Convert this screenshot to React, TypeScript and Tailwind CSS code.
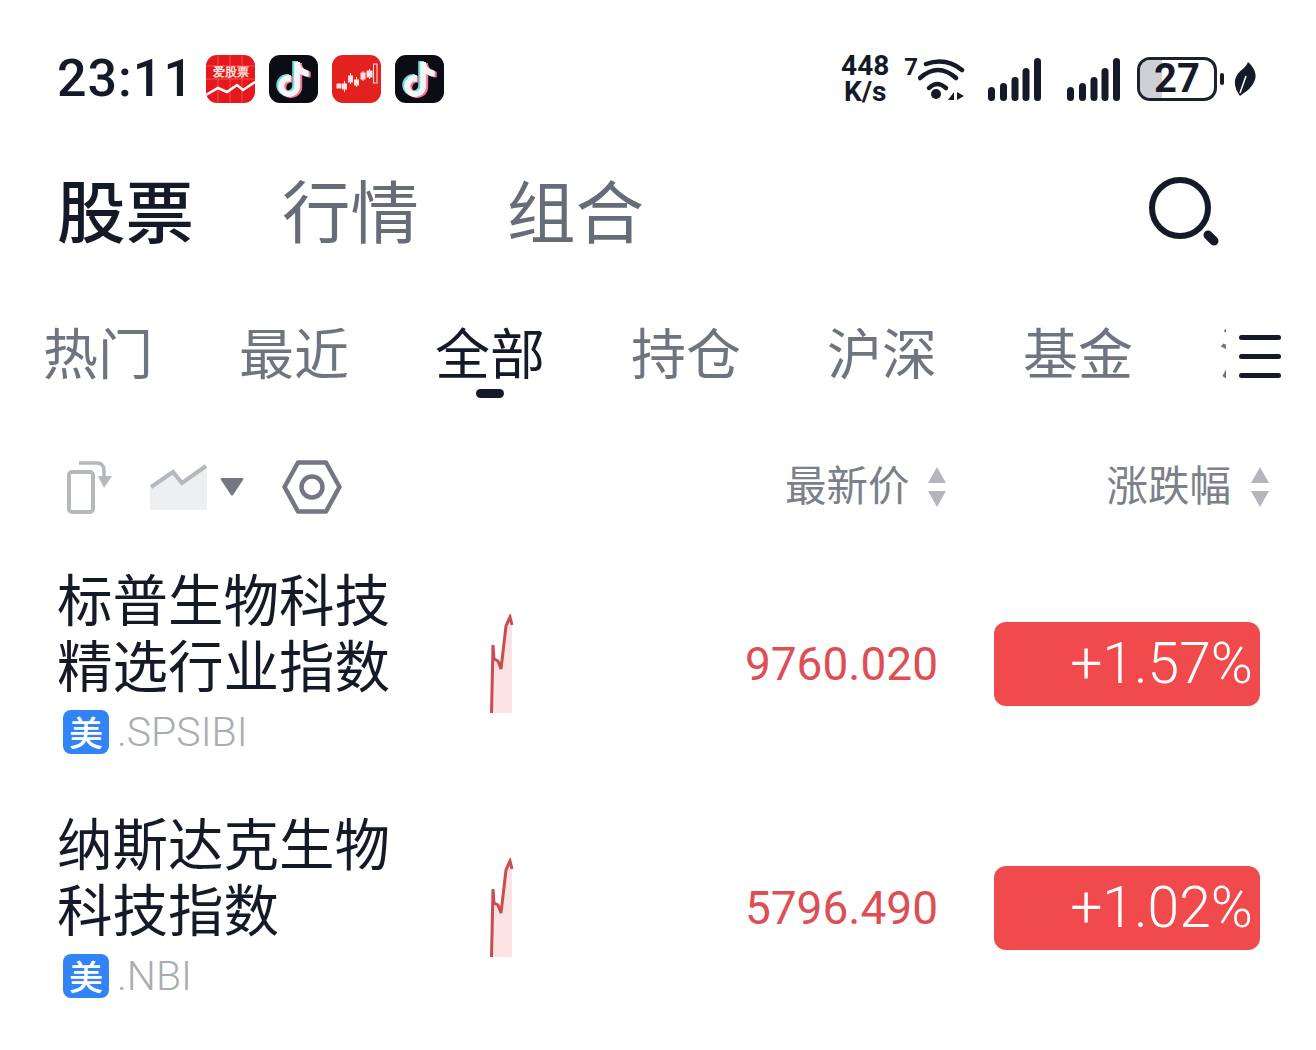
import { SiTiktok } from "react-icons/si";

const cjk = "font-['Noto_Sans_CJK_SC','Noto_Sans',sans-serif]";

function TiktokIcon() {
  return (
    <div className="relative w-[49px] h-[48px] rounded-[11px] bg-[#0b0c14] flex items-center justify-center overflow-hidden">
      <SiTiktok className="absolute w-[35px] h-[35px] text-[#5fe6e4] translate-x-[-2px] translate-y-[-1px]" />
      <SiTiktok className="absolute w-[35px] h-[35px] text-[#f2748f] translate-x-[2px] translate-y-[1px]" />
      <SiTiktok className="absolute w-[35px] h-[35px] text-[#f7f4f6]" />
    </div>
  );
}

function StockAppIcon() {
  return (
    <div className="relative w-[49px] h-[48px] rounded-[11px] bg-[#e5191d] overflow-hidden">
      <svg viewBox="0 0 49 48" className="absolute inset-0 w-full h-full">
        <path d="M0 11 H49 M0 24 H49 M24 0 V48 M12 0 V48 M36 0 V48" stroke="#f0504c" strokeWidth="1" />
        <path d="M0 40 L12 33 L21 37 L31 30 L37 35 L49 27" fill="none" stroke="#fff" strokeWidth="2.5" />
      </svg>
      <div className="relative pt-[10px] text-center text-[12px] leading-[14px] font-bold text-[#fbe0dc]">爱股票</div>
    </div>
  );
}

function CandleAppIcon() {
  return (
    <div className="w-[49px] h-[48px] rounded-[11px] bg-[#e3211f] overflow-hidden">
      <svg viewBox="0 0 49 48" className="w-full h-full" fill="#fbe3e0" stroke="#fbe3e0" strokeWidth="1">
        <rect x="5" y="29" width="4" height="4" />
        <path d="M12.5 26 V37" />
        <rect x="10.5" y="29" width="4" height="5" />
        <path d="M18.5 18 V29" />
        <rect x="16.5" y="21" width="4" height="6" />
        <path d="M24.5 22 V32" />
        <rect x="22.5" y="25" width="4" height="5" />
        <path d="M31 16 V26" />
        <rect x="29" y="18" width="4" height="6" />
        <path d="M37.5 14 V24" />
        <rect x="35" y="16" width="5" height="6" />
        <rect x="41.5" y="9" width="3.5" height="19" fill="none" />
      </svg>
    </div>
  );
}

function SignalBars() {
  return (
    <svg width="53" height="43" viewBox="0 0 53 43" fill="#151a28">
      <rect x="0" y="29" width="7" height="14" rx="3.5" />
      <rect x="12" y="25" width="7" height="18" rx="3.5" />
      <rect x="23.5" y="19" width="7" height="24" rx="3.5" />
      <rect x="34.5" y="10" width="7" height="33" rx="3.5" />
      <rect x="46" y="0" width="7" height="43" rx="3.5" />
    </svg>
  );
}

function WifiIcon() {
  return (
    <svg width="48" height="44" viewBox="0 0 48 44" fill="none" stroke="#151a28" strokeWidth="4.5" strokeLinecap="round">
      <path d="M8 7 Q28 0 44 13" />
      <path d="M2 21 Q20 5 38 21" />
      <path d="M11 31 Q19 23 28 31" />
      <circle cx="18" cy="37" r="5" fill="#151a28" stroke="none" />
      <path d="M30 43 L36 35 V43 Z M39 35 L46 39 L39 43 Z" fill="#151a28" stroke="none" />
    </svg>
  );
}

function Battery() {
  return (
    <div className="flex items-center">
      <div className="relative w-[80px] h-[44px] rounded-[13px] border-[3px] border-[#1c2130] flex items-center justify-center">
        <div className="absolute left-0 top-0 bottom-0 w-[22px] rounded-l-[10px] bg-[#cfd0d5]" />
        <span className="relative font-['Roboto',sans-serif] font-bold text-[40px] leading-[38px] text-[#151a28]">27</span>
      </div>
      <div className="ml-[3px] w-[4px] h-[12px] rounded-sm bg-[#151a28]" />
    </div>
  );
}

function Leaf() {
  return (
    <svg width="23" height="34" viewBox="0 0 23 34">
      <path d="M14 0 C20 5 24 13 20 20 C17 27 11 30 6 34 C1 27 -1 20 3 13 C6 8 12 6 14 0 Z" fill="#151a28" />
      <path d="M6 31 L12 14" stroke="#fff" strokeWidth="1.5" />
    </svg>
  );
}

function StatusBar() {
  return (
    <div className="h-[160px] pt-[55px] pl-[57px] pr-[59px] flex justify-between items-start text-[#151a28]">
      <div className="flex items-center">
        <span className="font-['Roboto',sans-serif] font-medium text-[52px] leading-[48px] w-[149px] tracking-[1px]">23:11</span>
        <div className="flex gap-[14px]">
          <StockAppIcon />
          <TiktokIcon />
          <CandleAppIcon />
          <TiktokIcon />
        </div>
      </div>
      <div className="flex items-center h-[48px]">
        <div className="w-[50px] font-['Roboto',sans-serif] font-bold text-[28px] leading-[26px] text-center">
          <div>448</div>
          <div>K/s</div>
        </div>
        <div className="ml-[14px] font-['Roboto',sans-serif] font-bold text-[24px] leading-none self-start">7</div>
        <WifiIcon />
        <div className="ml-[22px]"><SignalBars /></div>
        <div className="ml-[26px]"><SignalBars /></div>
        <div className="ml-[17px]"><Battery /></div>
        <div className="ml-[10px]"><Leaf /></div>
      </div>
    </div>
  );
}

function MainTabs() {
  return (
    <div className={`h-[104px] pl-[57px] pr-[96px] flex items-center justify-between ${cjk}`}>
      <div className="flex gap-[88px] text-[68.5px] leading-[84px] mb-[6px] text-[#666c78]">
        <span className="font-medium text-[#151a28]">股票</span>
        <span>行情</span>
        <span>组合</span>
      </div>
      <svg width="72" height="72" viewBox="0 0 72 72" fill="none" stroke="#151a28" strokeLinecap="round">
        <circle cx="32" cy="32" r="28" strokeWidth="6" />
        <path d="M60 59 L66 65" strokeWidth="9" />
      </svg>
    </div>
  );
}

const subTabs = ["热门", "最近", "全部", "持仓", "沪深", "基金", "港股"];

function SubTabs() {
  return (
    <div className={`relative h-[96px] mt-[40px] ${cjk}`}>
      <div className="flex gap-[86px] pl-[43px] overflow-hidden h-full">
        {subTabs.map((t) => (
          <div key={t} className="relative shrink-0 w-[110px] text-[55px] leading-[92px] text-center">
            <span className={t === "全部" ? "text-[#151a28]" : "text-[#6f7580]"}>{t}</span>
            {t === "全部" && (
              <div className="absolute left-[41px] top-[85px] w-[28px] h-[9px] rounded-full bg-[#151a28]" />
            )}
          </div>
        ))}
      </div>
      <div className="absolute right-0 top-0 bottom-0 w-[90px] bg-white pl-[13px] pt-[31px]">
        <div className="flex flex-col gap-[14px] w-[42px]">
          <div className="h-[5px] rounded-full bg-[#151a28]" />
          <div className="h-[5px] rounded-full bg-[#151a28]" />
          <div className="h-[5px] rounded-full bg-[#151a28]" />
        </div>
      </div>
    </div>
  );
}

function SortArrows() {
  return (
    <svg width="18" height="40" viewBox="0 0 18 40" fill="#b4b6bc">
      <path d="M9 0 L18 16 H0 Z M0 24 H18 L9 40 Z" strokeLinejoin="round" />
    </svg>
  );
}

function Toolbar() {
  return (
    <div className={`h-[112px] mt-[31px] pl-[66px] pr-[47px] flex items-center justify-between ${cjk}`}>
      <div className="flex items-center">
        <svg width="48" height="54" viewBox="0 0 48 54" fill="none" stroke="#b6b8bf" strokeWidth="4">
          <rect x="3" y="12" width="24" height="40" rx="3" />
          <path d="M13 3 H31 Q38 3 38 11 V22" strokeWidth="3.5" />
          <path d="M32 16 H46 L38 28 Z" fill="#b6b8bf" stroke="none" />
        </svg>
        <svg className="ml-[36px]" width="58" height="46" viewBox="0 0 58 46">
          <path d="M0 24 L23 8 L32 20 L57 2 V46 H0 Z" fill="#eeeff1" />
          <path d="M1 23 L23 8 L32 19 L56 2" fill="none" stroke="#b6b8bf" strokeWidth="4" />
        </svg>
        <svg className="ml-[12px]" width="24" height="18" viewBox="0 0 24 18" fill="#747782">
          <path d="M2 0 H22 Q24 0 23 2 L13 17 Q12 18 11 17 L1 2 Q0 0 2 0 Z" />
        </svg>
        <svg className="ml-[38px]" width="60" height="54" viewBox="0 0 60 54" fill="none" stroke="#747782">
          <path d="M16 2.5 H44 L57.5 27 L44 51.5 H16 L2.5 27 Z" strokeWidth="4.5" strokeLinejoin="round" />
          <circle cx="30" cy="27" r="10.5" strokeWidth="4.5" />
        </svg>
      </div>
      <div className="flex items-center text-[41.5px] leading-none text-[#7c808a]">
        <span className="mb-[6px]">最新价</span>
        <div className="ml-[19px]"><SortArrows /></div>
        <span className="ml-[160px] mb-[6px]">涨跌幅</span>
        <div className="ml-[20px]"><SortArrows /></div>
      </div>
    </div>
  );
}

function Spark() {
  return (
    <svg width="24" height="100" viewBox="0 0 24 100">
      <path d="M3 99 L3 33 L4 45 L8 47 L11 55 L16 12 L20 3 L22 10 V99 Z" fill="#fde3e4" />
      <path d="M1.5 99 L3 31 L4 45 L8 47 L11 55 L16 12 L20 3 L22 11" fill="none" stroke="#c94c50" strokeWidth="3" />
    </svg>
  );
}

type Stock = { name: string[]; code: string; price: string; change: string };

const stocks: Stock[] = [
  { name: ["标普生物科技", "精选行业指数"], code: ".SPSIBI", price: "9760.020", change: "+1.57%" },
  { name: ["纳斯达克生物", "科技指数"], code: ".NBI", price: "5796.490", change: "+1.02%" },
];

function StockRow({ s }: { s: Stock }) {
  return (
    <div className="h-[244px] pl-[57px] pr-[56px] flex items-center">
      <div className="w-[433px] shrink-0">
        <div className={`text-[55.5px] leading-[66px] text-[#151a28] ${cjk}`}>
          {s.name.map((l) => (
            <div key={l}>{l}</div>
          ))}
        </div>
        <div className="flex items-center h-[46px] mt-[13px] mb-[10px] pl-[6px]">
          <div className={`w-[46px] h-[44px] rounded-[8px] bg-[#3183f6] text-white text-[34px] leading-[44px] text-center font-medium ${cjk}`}>
            美
          </div>
          <span className="ml-[8px] font-['Roboto',sans-serif] font-light text-[41px] leading-[46px] text-[#a9acb3]">{s.code}</span>
        </div>
      </div>
      <Spark />
      <div className="flex-1 text-right font-['Roboto',sans-serif] text-[46px] leading-none text-[#dd4f54]">{s.price}</div>
      <div className="ml-[56px] w-[266px] h-[84px] rounded-[12px] bg-[#f04a4d] pr-[7px] text-right font-['Roboto',sans-serif] font-light text-[57px] leading-[84px] text-white">
        {s.change}
      </div>
    </div>
  );
}

export default function App() {
  return (
    <div className="w-[1316px] h-[1050px] bg-white overflow-hidden">
      <StatusBar />
      <MainTabs />
      <SubTabs />
      <Toolbar />
      <div className="mt-[-1px]">
        {stocks.map((s) => (
          <StockRow key={s.code} s={s} />
        ))}
      </div>
    </div>
  );
}
